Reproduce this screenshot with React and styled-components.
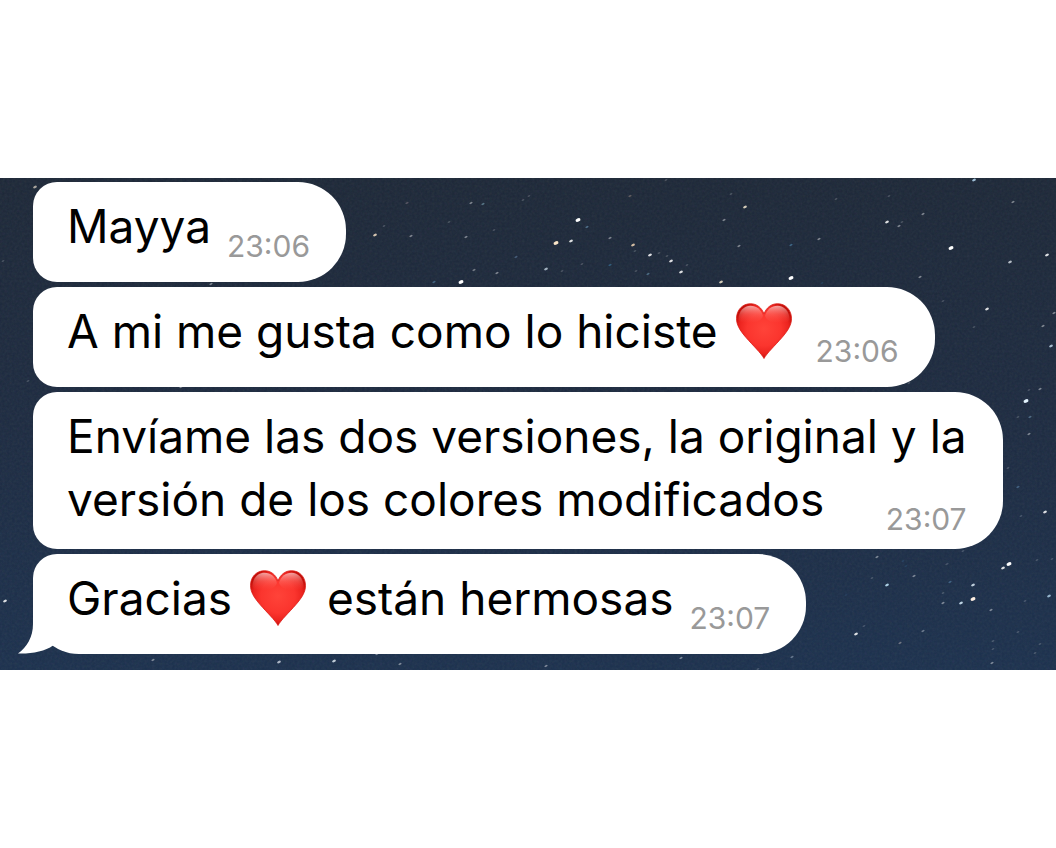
import styled, { createGlobalStyle } from "styled-components";

const GlobalStyle = createGlobalStyle`
  body {
    margin: 0;
    background-color: white;
    font-family: Inter, "Liberation Sans", sans-serif;
  }
`;

const Container = styled.main`
  min-height: 100vh;
  display: flex;
  flex-direction: column;
  justify-content: center;
`;

const Chat = styled.section`
  position: relative;
  overflow: hidden;
  background: linear-gradient(#1c2737, #1c2a40 50%, #1b304d);
`;

const Sky = styled.svg`
  position: absolute;
  top: 0;
  left: 0;
  width: 100%;
  height: 100%;
`;

const Messages = styled.ul`
  position: relative;
  list-style: none;
  margin: 0;
  padding: 4px 33px 16px;
  display: flex;
  flex-direction: column;
  align-items: flex-start;
  gap: 5px;
`;

const Bubble = styled.li`
  position: relative;
  box-sizing: border-box;
  min-height: 100px;
  padding: 13px 36px 12px 34px;
  background-color: white;
  border-radius: 24px 48px 48px ${(props) => (props.$last ? "46px" : "24px")};
`;

const Line = styled.div`
  font-size: 46px;
  line-height: 63px;
  color: black;
`;

const Time = styled.time`
  float: right;
  margin: 33px 0 0 16px;
  font-size: 30px;
  line-height: 36px;
  color: #999999;
`;

const HeartIcon = styled.svg`
  width: 56px;
  height: 56px;
  margin: 0 8px 0 5px;
  vertical-align: -11px;
`;

const Tail = styled.svg`
  position: absolute;
  left: -15px;
  bottom: 0;
  width: 50px;
  height: 50px;
`;

// x, y, size, color
const stars = [
  [375, 57, 2, "#f5dfc4"], [411, 58, 1], [466, 59, 1], [407, 25, 1, "#a08a99"],
  [471, 25, 1], [483, 26, 1, "#9fd3ef"], [529, 18, 0], [523, 22, 0],
  [578, 42, 3], [587, 49, 1, "#8cc8ef"], [571, 63, 2], [556, 65, 3, "#fbe6c8"],
  [546, 91, 2, "#b9c8d6"], [516, 79, 1, "#789bc0"], [474, 92, 1, "#e5e5e5"],
  [497, 95, 1], [461, 104, 3], [434, 104, 1, "#73b0d8"],
  [633, 67, 2, "#f2d6b4"], [635, 73, 0], [650, 77, 2], [610, 60, 1],
  [610, 87, 1, "#4d9dd2"], [659, 75, 0], [667, 78, 0], [671, 83, 2],
  [687, 87, 0], [681, 94, 2], [648, 96, 1, "#83bde0"], [636, 93, 0],
  [582, 86, 0], [630, 18, 1, "#b59a91"], [666, 2, 0], [449, 44, 0],
  [562, 93, 0], [494, 52, 0], [384, 48, 0], [974, 2, 2, "#b5d9f2"],
  [745, 29, 2, "#f5e9cf"], [731, 16, 0], [724, 42, 1], [739, 68, 1],
  [791, 67, 1, "#64b1e8"], [819, 61, 1], [791, 100, 3], [721, 104, 2, "#f5e9cf"],
  [822, 105, 0, "#3f87bd"], [836, 21, 0], [889, 18, 0], [887, 44, 2],
  [902, 44, 0], [899, 48, 1], [923, 36, 1], [1013, 24, 1], [951, 70, 3],
  [1047, 77, 2], [1010, 84, 2, "#cfd6dd"], [920, 99, 1], [943, 123, 0],
  [987, 131, 2], [1054, 135, 1], [1043, 148, 1], [974, 149, 0],
  [1051, 168, 2, "#bdd5e5"], [909, 205, 0], [1040, 211, 1], [1029, 212, 0],
  [1026, 223, 3, "#e4f5ff"], [1030, 239, 1, "#8fb9da"], [1018, 239, 0],
  [1029, 256, 1], [1008, 290, 0], [1018, 309, 1, "#6fa7d1"], [1045, 334, 2],
  [1021, 338, 0], [877, 379, 1], [963, 373, 0], [903, 383, 0, "#3f87bd"],
  [906, 388, 0, "#3f87bd"], [947, 386, 1, "#7f8597"], [1009, 386, 3],
  [1003, 390, 2], [1037, 382, 0], [1052, 381, 0], [872, 400, 0],
  [914, 398, 1], [887, 407, 2, "#c4eaff"], [950, 404, 1, "#6fa7d1"],
  [973, 407, 2, "#dcebf5"], [943, 415, 0], [943, 425, 1], [961, 425, 2, "#d9f1ff"],
  [973, 421, 3, "#fff0e2"], [1049, 418, 2, "#a9cbe2"], [1025, 423, 0],
  [991, 432, 1], [846, 417, 0, "#3f6fa0"], [864, 448, 0], [856, 456, 2],
  [923, 453, 1, "#d1dce5"], [900, 465, 1, "#d9cec7"], [792, 479, 1, "#c6d7e5"],
  [993, 463, 0], [993, 471, 0], [992, 485, 1], [1040, 466, 0], [1035, 475, 0],
  [1018, 454, 0], [758, 491, 0], [5, 423, 2], [153, 482, 1], [279, 484, 2, "#c6cdd8"],
  [334, 483, 2, "#dce6ef"], [377, 476, 1], [400, 486, 1], [546, 488, 1],
  [681, 480, 1], [35, 9, 2, "#c3bcb0"], [211, 106, 1], [3, 83, 0],
  [181, 209, 1], [28, 203, 0],
];

const messages = [
  { lines: [["Mayya"]], time: "23:06" },
  { lines: [["A mi me gusta como lo hiciste ", "heart"]], time: "23:06" },
  {
    lines: [
      ["Envíame las dos versiones, la original y la"],
      ["versión de los colores modificados"],
    ],
    time: "23:07",
  },
  { lines: [["Gracias ", "heart", " están hermosas"]], time: "23:07" },
];

const Heart = ({ id }) => (
  <HeartIcon viewBox="0 0 56 56" role="img" aria-label="corazón">
    <defs>
      <radialGradient id={`${id}-fill`} cx="50%" cy="46%" r="56%">
        <stop offset="0" stopColor="#ff4339" />
        <stop offset="0.55" stopColor="#fb352e" />
        <stop offset="0.8" stopColor="#ec241f" />
        <stop offset="1" stopColor="#bd0c07" />
      </radialGradient>
      <linearGradient id={`${id}-shine`} x1="0" y1="0" x2="0" y2="1">
        <stop offset="0" stopColor="#fff" stopOpacity="0.6" />
        <stop offset="0.5" stopColor="#ffb0a8" stopOpacity="0.25" />
        <stop offset="1" stopColor="#ff6a60" stopOpacity="0" />
      </linearGradient>
    </defs>
    <path
      d="M28 55.500C25 50 17 42.500 10 34.500C4 27.500 0.500 22 0.500 15.500C0.500 7 6.500 0.700 14.500 0.700C21 0.700 26 5 28 11C30 5 35 0.700 41.500 0.700C49.500 0.700 55.500 7 55.500 15.500C55.500 22 52 27.500 46 34.500C39 42.500 31 50 28 55.500Z"
      fill={`url(#${id}-fill)`}
      stroke="#dc1a14"
      strokeWidth="0.8"
    />
    <path
      d="M2.500 17C2.500 8 8 2.700 14.500 2.700C20.500 2.700 25 6 27 13C25 18 20 20 13 20C8 20 4 19 2.500 17Z"
      fill={`url(#${id}-shine)`}
    />
    <path
      d="M53.500 17C53.500 8 48 2.700 41.500 2.700C35.500 2.700 31 6 29 13C31 18 36 20 43 20C48 20 52 19 53.500 17Z"
      fill={`url(#${id}-shine)`}
    />
  </HeartIcon>
);

const StarrySky = () => (
  <Sky viewBox="0 0 1056 492" preserveAspectRatio="xMidYMid slice" aria-hidden="true">
    <filter id="grain" x="0" y="0" width="100%" height="100%">
      <feTurbulence type="fractalNoise" baseFrequency="0.4" numOctaves="2" />
    </filter>
    <rect width="1056" height="492" filter="url(#grain)" opacity="0.08" />
    {stars.map(([x, y, size, color = "#ffffff"]) => (
      <ellipse
        key={`${x}-${y}`}
        cx={x}
        cy={y}
        rx={[1.5, 1.7, 2, 2.6][size]}
        ry={[0.8, 0.9, 1.2, 1.7][size]}
        fill={color}
        opacity={[0.18, 0.42, 0.85, 1][size]}
        transform={`rotate(-25 ${x} ${y})`}
      />
    ))}
  </Sky>
);

const App = () => {
  return (
    <>
      <GlobalStyle />
      <Container>
        <Chat>
          <StarrySky />
          <Messages>
            {messages.map((message, index) => {
              const last = index === messages.length - 1;
              return (
                <Bubble key={index} $last={last}>
                  {last && (
                    <Tail viewBox="0 0 50 50" aria-hidden="true">
                      <path
                        d="M15 0V20C15 33 9 43 0 49.500C13 50 27 47.500 35 41.500L45 20V0Z"
                        fill="white"
                      />
                    </Tail>
                  )}
                  {message.lines.map((line, row) => (
                    <Line key={row}>
                      {line.map((part, i) =>
                        part === "heart" ? <Heart key={i} id={`heart${index}`} /> : part
                      )}
                      {row === message.lines.length - 1 && <Time>{message.time}</Time>}
                    </Line>
                  ))}
                </Bubble>
              );
            })}
          </Messages>
        </Chat>
      </Container>
    </>
  );
};

export default App;
